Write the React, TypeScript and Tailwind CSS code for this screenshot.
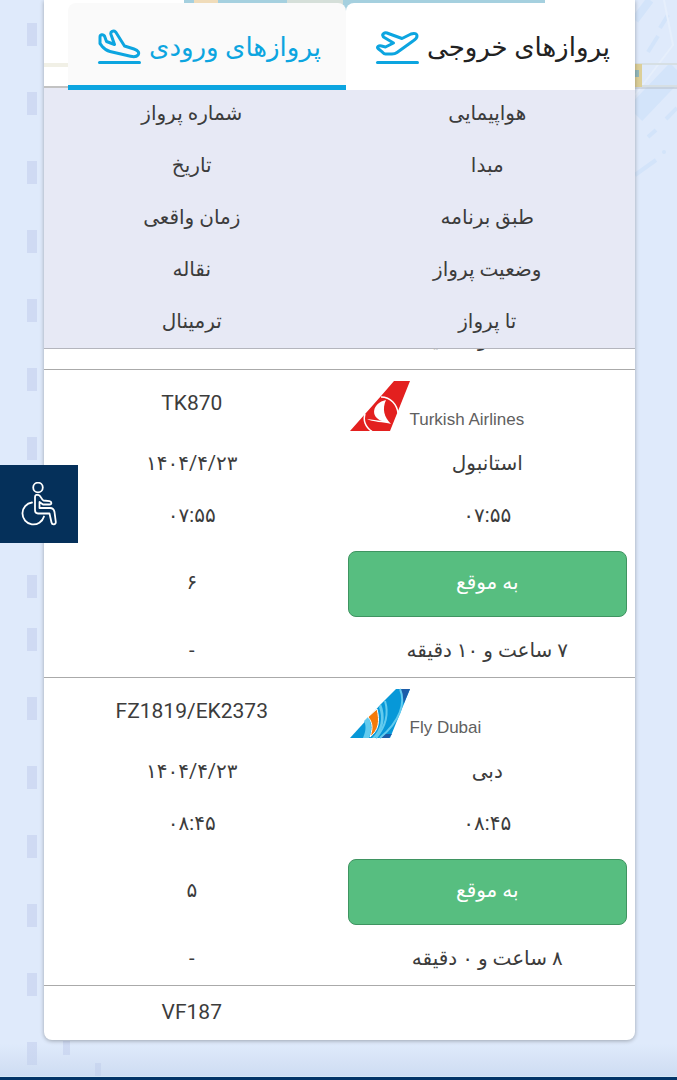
import type { ReactNode } from "react";
import { clsx } from "clsx";

type Flight = {
  number: string;
  airline: "turkish" | "flydubai";
  origin: string;
  date: string;
  scheduled: string;
  actual: string;
  status: string;
  belt: string;
  remaining: string;
  terminal: string;
};

const columns = [
  "هواپیمایی",
  "شماره پرواز",
  "مبدا",
  "تاریخ",
  "طبق برنامه",
  "زمان واقعی",
  "وضعیت پرواز",
  "نقاله",
  "تا پرواز",
  "ترمینال",
];

const flights: Flight[] = [
  {
    number: "TK870",
    airline: "turkish",
    origin: "استانبول",
    date: "۱۴۰۴/۴/۲۳",
    scheduled: "۰۷:۵۵",
    actual: "۰۷:۵۵",
    status: "به موقع",
    belt: "۶",
    remaining: "۷ ساعت و ۱۰ دقیقه",
    terminal: "-",
  },
  {
    number: "FZ1819/EK2373",
    airline: "flydubai",
    origin: "دبی",
    date: "۱۴۰۴/۴/۲۳",
    scheduled: "۰۸:۴۵",
    actual: "۰۸:۴۵",
    status: "به موقع",
    belt: "۵",
    remaining: "۸ ساعت و ۰ دقیقه",
    terminal: "-",
  },
];

const dashes = [23, 92, 161, 230, 299, 368, 437, 506, 575, 628, 697, 766, 835, 904, 973, 1042];

function LandingIcon() {
  return (
    <svg className="h-9 w-11 shrink-0" viewBox="0 0 44 36" fill="none" stroke="#0ca5e0" strokeWidth="3" strokeLinecap="round" strokeLinejoin="round">
      <path d="M3 8C3 5.500 6 5 7.500 7L9.500 12.500L17.500 15.500L14 5.500C13 2.300 16.500 1 18.700 3L27.500 17L37 20C41.500 21.500 42.500 24 41 26C39.500 28 36.500 28 33.500 27.300L13 22.500C9 21.500 7 19.500 5 17.200L3 14.500Z" />
      <path d="M2.500 33.500H42.500" />
    </svg>
  );
}

function TakeoffIcon() {
  return (
    <svg className="h-9 w-11 shrink-0" viewBox="0 0 44 36" fill="none" stroke="#0ca5e0" strokeWidth="3" strokeLinecap="round" strokeLinejoin="round">
      <path d="M8 7C7 5.500 9 3.300 12 4L27 9.500L36 5C39 3.800 42 4.500 42 7C42 9 40 10.800 38 12L22 23.500C20.500 24.600 19 25 17 25H10.500C9 25 8.500 24.300 7.500 23.200L3 19.500C1.500 18 3.500 16.300 6.500 17L10.500 18L18.500 14L8.500 8Z" />
      <path d="M2.500 33.500H42.500" />
    </svg>
  );
}

function TurkishTail() {
  return (
    <svg className="h-13 w-15" viewBox="0 0 60 52">
      <path d="M44 1H60L40 51H0L31 16Z" fill="#e3201f" />
      <path d="M31 17C41 17 47 25 48 33M15 34C13 40 15 47 22 51.500" fill="none" stroke="#fff" strokeWidth="1.500" />
      <path d="M36 20C22 23 20 37 32 41L17 39C22 42 34 42 41 44C34 37 32 29 36 20Z" fill="#fff" />
    </svg>
  );
}

function FlyDubaiTail() {
  return (
    <svg className="h-13 w-15" viewBox="0 0 60 52">
      <path d="M46 1H60L40 50H0L31 16Z" fill="#0798d8" />
      <path d="M49 1H60L54 15Z" fill="#1d5ca8" />
      <path d="M39 50L42 46H35L30 50Z" fill="#1d5ca8" />
      <path d="M14 33C17 39 15 45 13 50H19C22 42 22 36 18 29ZM29 19C33 30 31 42 22 50H25C34 42 36 28 31 16Z" fill="#63cbee" />
      <path d="M35 13C39 26 36 38 26 50M50 1C56 15 50 33 30 50" fill="none" stroke="#63cbee" strokeWidth="2" />
      <path d="M27 21L18 29C24 36 22 43 20 49C29 42 30 33 27 21Z" fill="#f47a0b" stroke="#fff" strokeWidth="1" />
    </svg>
  );
}

function WheelchairIcon() {
  return (
    <svg className="h-11 w-9" viewBox="0 0 36 44" fill="none" stroke="#fff" strokeWidth="1.800" strokeLinecap="round" strokeLinejoin="round">
      <circle cx="17" cy="5.500" r="4.800" />
      <path d="M14 15C14 12.500 16 12.500 18 13.200C20 14.200 20.500 17.500 22.500 18.500L28.500 19.200C31 19.800 31 22.500 28.500 22.500H22L18.500 20V26H29C32 26 33 27.500 33.500 30L34.800 40C35 43 31 43 30.500 40.500L28.500 31.500H17C14.500 31.500 14 30 14 28Z" />
      <path d="M11 20.500A11 11 0 1 0 23 34.500" />
    </svg>
  );
}

function Scenery() {
  return (
    <svg className="absolute inset-0 h-full w-full" aria-hidden="true">
      <g fill="#cfdaf3">
        {dashes.map((y) => (
          <rect key={y} x="27" y={y} width="10" height="23" />
        ))}
        <rect x="63" y="1041" width="7" height="14" />
        <rect x="95" y="1063" width="6" height="13" />
      </g>
      <g fill="none" stroke="#d3e4fa">
        <path d="M677 70L635 114" strokeWidth="20" />
        <path d="M650 0L635 20" strokeWidth="8" />
        <path d="M668 15L660 28M658 36L648 52M677 108L666 119M656 130L648 137M656 160L635 175" strokeWidth="4" />
        <path d="M664 0L673 45L635 95" stroke="#e6effc" strokeWidth="2" />
      </g>
      <circle cx="664" cy="152" r="2" fill="#d3e4fa" />
      <path d="M635 64H677M642 86H677" stroke="#d6dfe4" strokeWidth="2" />
      <path d="M635 88H677" stroke="#b7bec7" strokeWidth="1" />
      <rect x="635" y="64" width="7" height="23" fill="#dccf98" />
      <rect x="635" y="70" width="4" height="7" fill="#94b9bb" />
    </svg>
  );
}

function Tab({ active, icon, children }: { active?: boolean; icon: ReactNode; children: ReactNode }) {
  return (
    <button
      type="button"
      role="tab"
      aria-selected={!!active}
      className={clsx(
        "flex h-full items-center justify-center gap-2 rounded-t-lg border-b-5 pt-1.5 pl-1 text-[26px] leading-10 whitespace-nowrap",
        active ? "border-[#0ca5e0] bg-[#fafafa] text-[#0ca5e0]" : "border-white bg-white text-[#222]"
      )}
    >
      {children}
      {icon}
    </button>
  );
}

function FlightRow({ flight }: { flight: Flight }) {
  return (
    <tr className="grid grid-cols-2 border-b border-[#aaa] pb-0.5">
      <td className="flex h-[67px] items-center pt-1" dir="ltr">
        <span className="flex items-end pl-2.5 font-['Liberation_Sans',sans-serif] text-[17px] leading-6 text-[#606060]">
          {flight.airline === "turkish" ? <TurkishTail /> : <FlyDubaiTail />}
          {flight.airline === "turkish" ? "Turkish Airlines" : "Fly Dubai"}
        </span>
      </td>
      <td className="flex h-[67px] items-center justify-center text-[21px]">{flight.number}</td>
      <td className="flex h-13 items-center justify-center">{flight.origin}</td>
      <td className="flex h-13 items-center justify-center">{flight.date}</td>
      <td className="flex h-13 items-center justify-center">{flight.scheduled}</td>
      <td className="flex h-13 items-center justify-center">{flight.actual}</td>
      <td className="flex h-21 items-center px-2 pt-0.5">
        <button type="button" className="h-[66px] w-full rounded-lg border border-[#3f9461] bg-[#57be80] pb-1 text-white">
          {flight.status}
        </button>
      </td>
      <td className="flex h-21 items-center justify-center pb-0.5">{flight.belt}</td>
      <td className="flex h-[50px] items-center justify-center">{flight.remaining}</td>
      <td className="flex h-[50px] items-center justify-center">{flight.terminal}</td>
    </tr>
  );
}

export default function App() {
  return (
    <div dir="rtl" className="relative bg-[#dfeafb] font-['Roboto','DejaVu_Sans',sans-serif] text-xl text-[#3c3c3c]">
      <Scenery />
      <div className="absolute inset-x-0 bottom-0 h-9 bg-linear-to-b from-transparent to-[#bfd0ea]/60" />
      <main className="relative pb-9 pl-[44px] pr-[42px]">
        <section className="overflow-hidden rounded-b-lg bg-white shadow-[0_1px_4px_rgba(0,0,0,0.3)]">
          <div className="relative -mb-0.5 pt-[3px] pl-6">
            <div className="absolute top-0 right-[90px] left-[140px] h-3 bg-[#a5d0df]" />
            <div className="absolute top-0 left-[150px] h-3 w-6 bg-[#f0dcba]" />
            <div className="absolute top-0 left-[243px] h-3 w-14 bg-[#d5dfd9]" />
            <div className="absolute top-[63px] left-0 h-1 w-6 bg-[#f1f0e6]" />
            <div className="absolute top-[86px] left-0 h-0.5 w-6 bg-[#c2c2c2]" />
            <div role="tablist" className="relative grid h-[87px] grid-cols-[289fr_278fr]">
              <Tab icon={<TakeoffIcon />}>پروازهای خروجی</Tab>
              <Tab active icon={<LandingIcon />}>
                پروازهای ورودی
              </Tab>
            </div>
          </div>
          <table className="block">
            <thead className="block border-b border-[#b4b5bd] bg-[#e7e9f5]">
              <tr className="grid grid-cols-2">
                {columns.map((column) => (
                  <th key={column} scope="col" className="flex h-13 items-center justify-center pb-0.5 font-normal">
                    {column}
                  </th>
                ))}
              </tr>
            </thead>
            <tbody className="block">
              {/* tail of the row scrolled under the header */}
              <tr className="grid h-[21px] grid-cols-2 content-end overflow-hidden border-b border-[#aaa]">
                <td className="flex h-13 items-center justify-center pb-2">۶ ساعت و ۰ دقیقه</td>
                <td />
              </tr>
              {flights.map((flight) => (
                <FlightRow key={flight.number} flight={flight} />
              ))}
              <tr className="grid grid-cols-2">
                <td />
                <td className="flex h-[54px] items-center justify-center text-[21px]">VF187</td>
              </tr>
            </tbody>
          </table>
        </section>
      </main>
      <footer className="relative h-1 border-t border-[#d5e7f5] bg-[#033467]" />
      <button
        type="button"
        aria-label="دسترسی‌پذیری"
        className="fixed top-[465px] left-0 flex size-[78px] items-center justify-center bg-[#05305a]"
      >
        <WheelchairIcon />
      </button>
    </div>
  );
}
